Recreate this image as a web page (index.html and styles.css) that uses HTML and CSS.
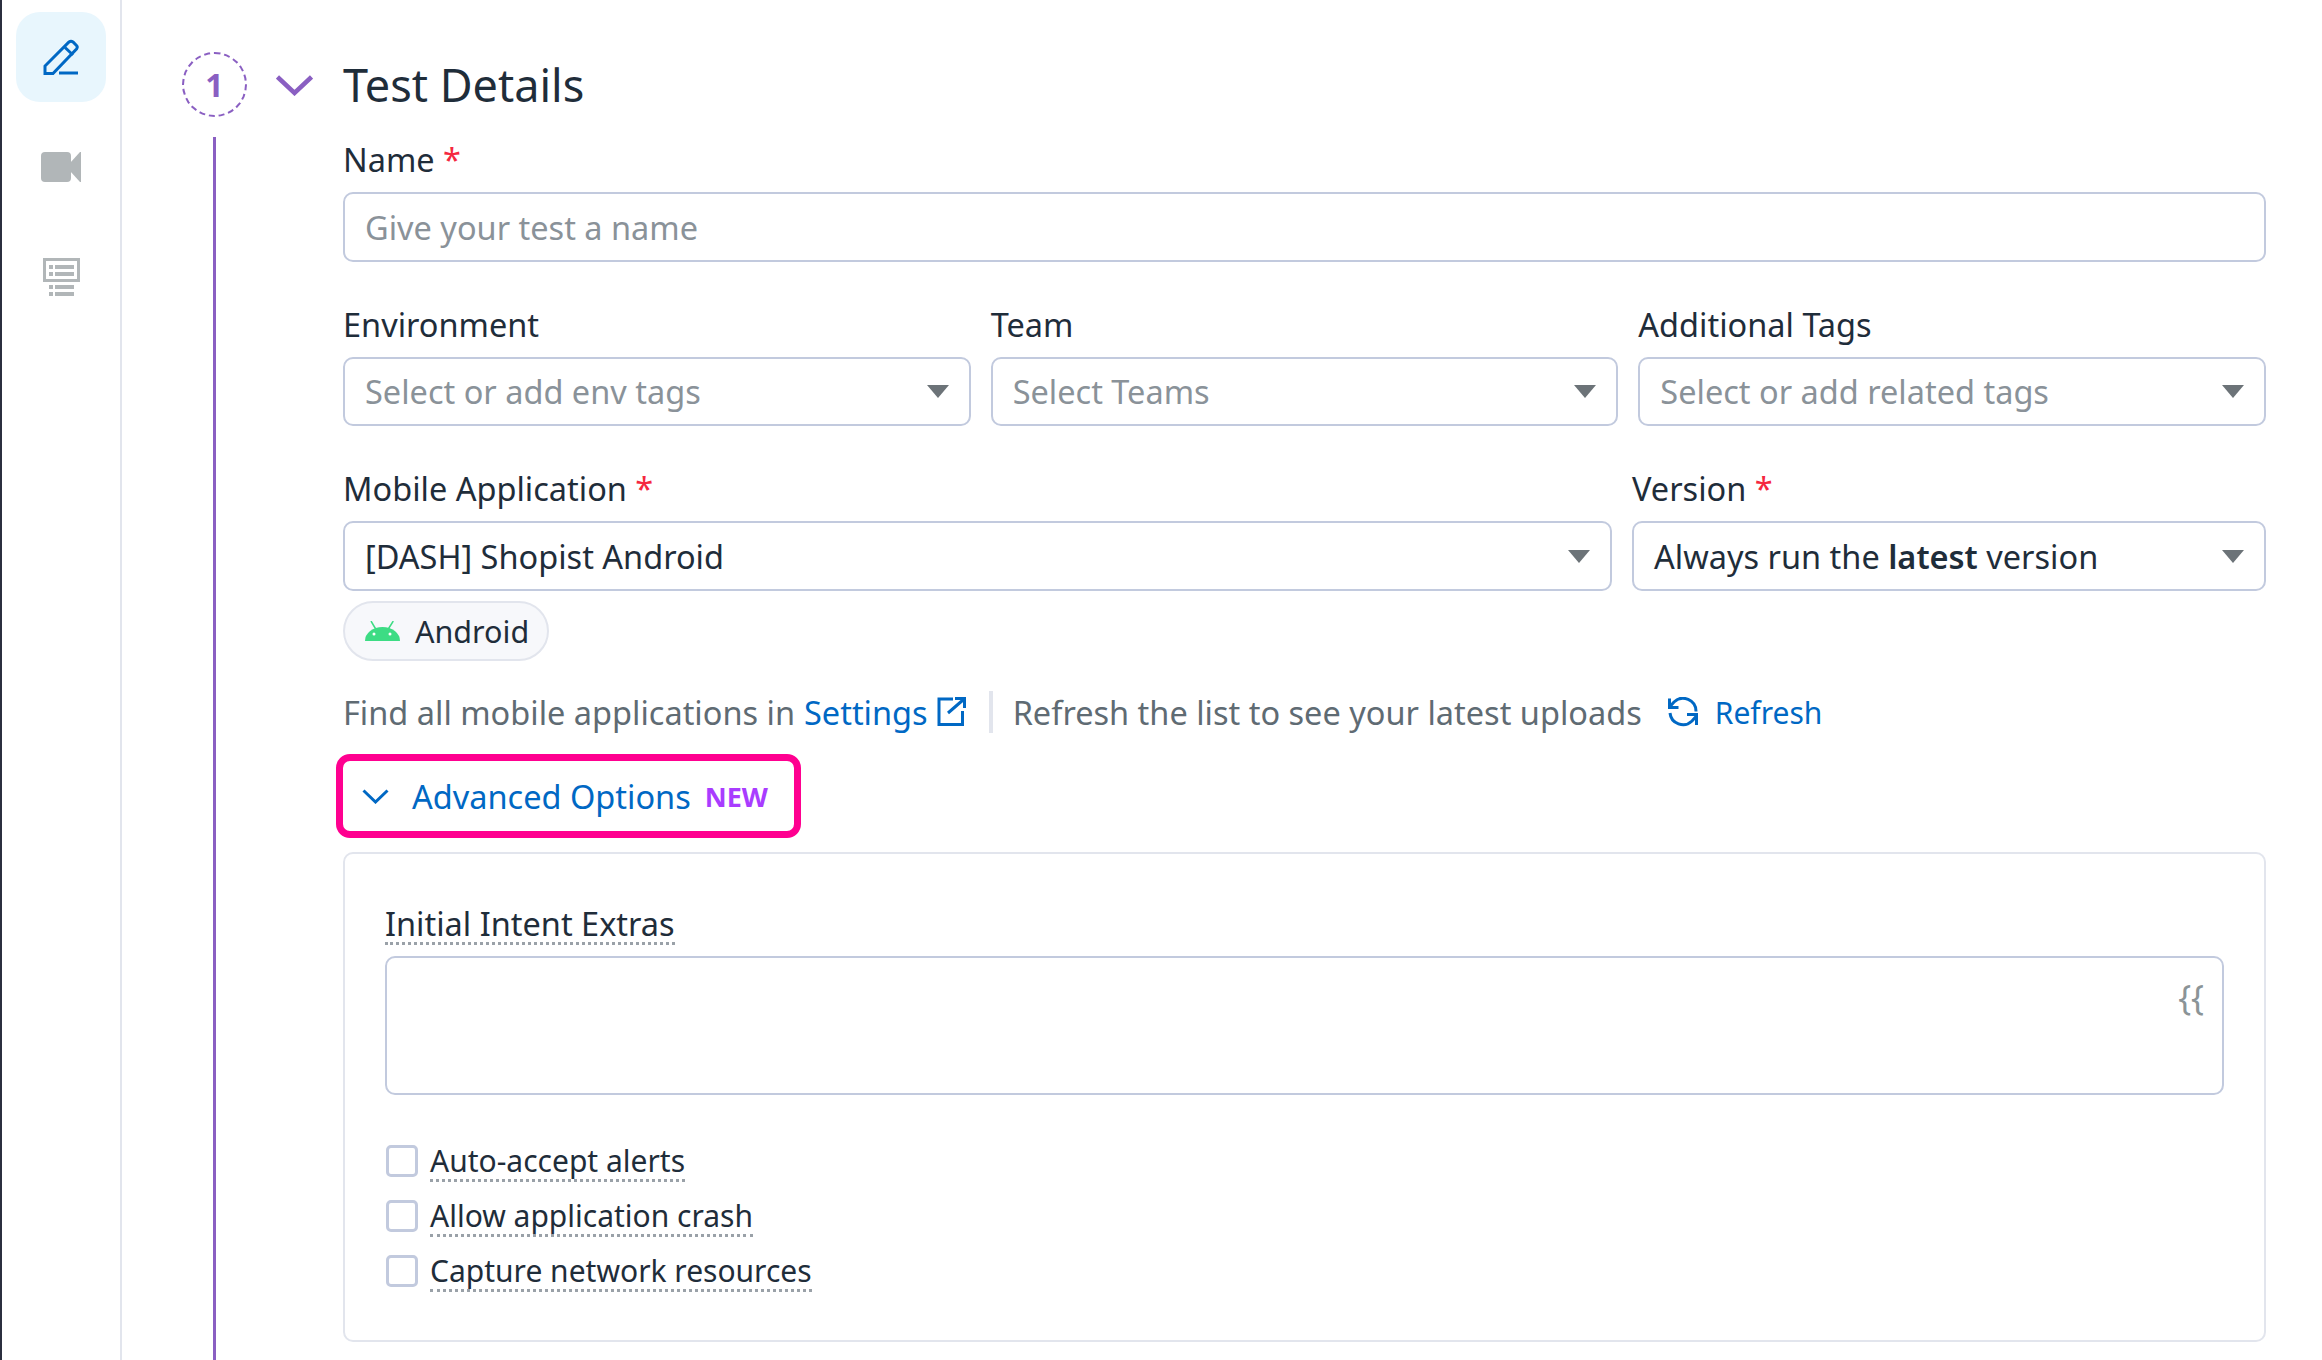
FILE: index.html
```html
<!DOCTYPE html>
<html lang="en">
<head>
	<meta charset="UTF-8">
	<title>Test Details</title>
	<link rel="stylesheet" href="styles.css">
</head>
<body>
	<div class="app">
		<!-- Left icon rail -->
		<nav class="sidebar">
			<a class="side-btn side-btn-active">
				<svg width="36" height="36" viewBox="0 0 36 36" fill="none" stroke="#0068c4" stroke-width="3">
					<path d="M2 34.5V27L26 3Q28 1.5 30 3L33.5 6.5Q35 8 33.5 10L10 34.5Z"/>
					<path d="M22 8.5L30 16"/>
					<path d="M16 34H35"/>
				</svg>
			</a>
			<a class="side-btn">
				<svg width="40" height="30" viewBox="0 0 40 30" fill="#b1b6b8">
					<rect width="30" height="30" rx="4"/>
					<path d="M29 11L39 0H40V30H39L29 19Z"/>
				</svg>
			</a>
			<a class="side-btn">
				<svg width="37" height="38" viewBox="0 0 37 38" fill="#b1b6b8">
					<path d="M0 0H37V24H0ZM3 3V21H34V3Z" fill-rule="evenodd"/>
					<rect x="6" y="7" width="4" height="4"/>
					<rect x="12" y="7" width="19" height="4"/>
					<rect x="6" y="14" width="4" height="4"/>
					<rect x="12" y="14" width="19" height="4"/>
					<rect x="6" y="27" width="4" height="4"/>
					<rect x="12" y="27" width="19" height="4"/>
					<rect x="6" y="34" width="4" height="4"/>
					<rect x="12" y="34" width="19" height="4"/>
				</svg>
			</a>
		</nav>

		<main class="step">
			<!-- Step number and its line -->
			<div class="step-rail">
				<div class="step-num">1</div>
				<div class="step-line"></div>
			</div>
			<svg class="step-chevron" width="37" height="21" viewBox="0 0 37 21" fill="none" stroke="#8a5fc2" stroke-width="4.5">
				<path d="M1.5 2L18.5 18L35.5 2"/>
			</svg>

			<div class="step-body">
				<h1 class="title">Test Details</h1>

				<label class="label label-name">Name <span class="req">*</span></label>
				<div class="input placeholder">Give your test a name</div>

				<div class="row row-three">
					<div>
						<label class="label">Environment</label>
						<div class="input select placeholder">Select or add env tags<i class="caret"></i></div>
					</div>
					<div>
						<label class="label">Team</label>
						<div class="input select placeholder">Select Teams<i class="caret"></i></div>
					</div>
					<div>
						<label class="label">Additional Tags</label>
						<div class="input select placeholder">Select or add related tags<i class="caret"></i></div>
					</div>
				</div>

				<div class="row row-app">
					<div>
						<label class="label">Mobile Application <span class="req">*</span></label>
						<div class="input select">[DASH] Shopist Android<i class="caret"></i></div>
					</div>
					<div>
						<label class="label">Version <span class="req">*</span></label>
						<div class="input select">
							<span>Always run the <b class="strong">latest</b> version</span><i class="caret"></i>
						</div>
					</div>
				</div>

				<div class="pill">
					<svg width="35" height="20" viewBox="0 0 35 20">
						<path d="M0 20A17.5 14 0 0 1 35 20Z" fill="#3ddc84"/>
						<path d="M10.7 8L6 0M23.3 8L28.3 0" stroke="#3ddc84" stroke-width="1.5"/>
						<circle cx="9" cy="13" r="1.5" fill="#fff"/>
						<circle cx="25" cy="13" r="1.5" fill="#fff"/>
					</svg>
					Android
				</div>

				<div class="hint">
					<span>Find all mobile applications in</span>
					<a class="link link-settings">Settings</a>
					<svg class="icon-ext" width="30" height="30" viewBox="0 0 30 30" fill="none" stroke="#0068c4" stroke-width="3">
						<path d="M16 2H2V27.5H25.5V14"/>
						<path d="M11 16L26 3M18 1.5H27.5V11"/>
					</svg>
					<span class="hint-sep"></span>
					<span>Refresh the list to see your latest uploads</span>
					<svg class="icon-refresh" width="30" height="30" viewBox="0 0 30 30" fill="none" stroke="#0068c4" stroke-width="3">
						<path d="M28 14.5A13 13 0 0 0 6 5L1.5 10"/>
						<path d="M1.5 1.5V10.5H10.5"/>
						<path d="M2 16A13 13 0 0 0 24 24L28.5 19"/>
						<path d="M28.5 28V17.5H19"/>
					</svg>
					<a class="link link-refresh">Refresh</a>
				</div>

				<div class="advanced">
					<svg width="27" height="15" viewBox="0 0 27 15" fill="none" stroke="#0068c4" stroke-width="3">
						<path d="M1.5 1.5L13.5 13L25.5 1.5"/>
					</svg>
					<span class="advanced-text">Advanced Options</span>
					<span class="badge-new">NEW</span>
				</div>

				<section class="panel">
					<label class="label"><span class="dotted">Initial Intent Extras</span></label>
					<div class="textarea"><span class="braces">{{</span></div>
					<div class="checks">
						<div class="check"><span class="box"></span><span class="dotted">Auto-accept alerts</span></div>
						<div class="check"><span class="box"></span><span class="dotted">Allow application crash</span></div>
						<div class="check"><span class="box"></span><span class="dotted">Capture network resources</span></div>
					</div>
				</section>
			</div>
		</main>
	</div>
</body>
</html>
```

FILE: styles.css
```css
/* Global Styles */
html, body {
	margin: 0;
	height: 100%;
	overflow: hidden;
}

body {
	font-family: "Noto Sans", sans-serif;
	font-size: 32.5px;
	color: #1f2d3a;
	background: #fff;
}

.app {
	display: flex;
	height: 100vh;
}

/* Left icon rail */
.sidebar {
	box-sizing: border-box;
	flex: 0 0 122px;
	border-left: 2px solid #2b2f3f;
	border-right: 2px solid #e2e5ed;
	padding: 12px 14px 0;
	display: flex;
	flex-direction: column;
	gap: 20px;
}

.side-btn {
	width: 90px;
	height: 90px;
	border-radius: 24px;
	display: flex;
	align-items: center;
	justify-content: center;
}

.side-btn-active {
	background: #e8f6fd;
}

/* Step layout */
.step {
	flex: 1;
	display: flex;
	align-items: flex-start;
	height: 100%;
	padding-left: 60px;
	box-sizing: border-box;
}

.step-rail {
	flex: 0 0 65px;
	height: 100%;
	display: flex;
	flex-direction: column;
	align-items: center;
	padding-top: 52px;
	box-sizing: border-box;
}

.step-num {
	flex: 0 0 65px;
	width: 65px;
	box-sizing: border-box;
	border: 2.5px dashed #8a5fc2;
	border-radius: 50%;
	display: flex;
	align-items: center;
	justify-content: center;
	font-size: 32px;
	font-weight: 700;
	color: #8a5fc2;
}

.step-line {
	flex: 1;
	width: 3px;
	margin-top: 20px;
	background: #8a5fc2;
}

.step-chevron {
	margin: 75px 30px 0 29px;
	flex: none;
}

.step-body {
	width: 1923px;
	flex: none;
}

.title {
	margin: 60px 0 0;
	font-size: 45px;
	font-weight: 400;
	line-height: 50px;
}

/* Form fields */
.label {
	display: block;
	height: 40px;
	line-height: 40px;
	margin-bottom: 12px;
}

.label-name {
	margin-top: 30px;
}

.req {
	color: #f5283f;
}

.input {
	box-sizing: border-box;
	height: 70px;
	border: 2.5px solid #c2cade;
	border-radius: 10px;
	padding: 0 20px;
	display: flex;
	align-items: center;
	justify-content: space-between;
}

.placeholder {
	color: #8a9299;
}

.select {
	padding-right: 20px;
}

.strong {
	font-weight: 600;
}

.caret {
	width: 0;
	height: 0;
	border-left: 11.5px solid transparent;
	border-right: 11.5px solid transparent;
	border-top: 13px solid #6c7378;
}

.row {
	display: grid;
	gap: 20px;
	margin-top: 43px;
}

.row-three {
	grid-template-columns: repeat(3, 1fr);
}

.row-three .input {
	height: 69px;
}

.row-app {
	grid-template-columns: 1269px 634px;
}

/* Platform pill */
.pill {
	box-sizing: border-box;
	display: inline-flex;
	align-items: center;
	gap: 15px;
	width: 206px;
	height: 60px;
	margin-top: 10px;
	padding-left: 20px;
	font-size: 30.5px;
	background: #f7f8fb;
	border: 2px solid #e2e5ed;
	border-radius: 30px;
	vertical-align: top;
}

/* Help line */
.hint {
	display: flex;
	align-items: center;
	height: 42px;
	margin-top: 30px;
	color: #5f6b73;
}

.link {
	color: #0068c4;
}

.link-settings {
	margin-left: 9px;
}

.icon-ext {
	margin-left: 9px;
}

.hint-sep {
	width: 4px;
	height: 42px;
	margin: 0 20px 0 22px;
	background: #e2e5ed;
}

.icon-refresh {
	margin-left: 26px;
}

.link-refresh {
	margin-left: 17px;
	font-size: 30px;
}

/* Advanced Options toggle */
.advanced {
	box-sizing: border-box;
	display: flex;
	align-items: center;
	width: 465px;
	height: 84px;
	margin: 21px 0 14px -7px;
	padding-left: 19px;
	border: 7px solid #ff0090;
	border-radius: 14px;
	color: #0068c4;
}

.advanced-text {
	margin-left: 23px;
}

.badge-new {
	margin-left: 14px;
	font-size: 27px;
	font-weight: 700;
	color: #a93cff;
}

/* Advanced panel */
.panel {
	box-sizing: border-box;
	height: 490px;
	border: 2.5px solid #e2e5ed;
	border-radius: 10px;
	padding: 50px 40px 0;
}

.dotted {
	border-bottom: 3px dotted #9aa1a8;
	line-height: 36px;
	display: inline-block;
}

.textarea {
	box-sizing: border-box;
	height: 139px;
	border: 2.5px solid #c2cade;
	border-radius: 10px;
	display: flex;
	justify-content: flex-end;
	padding: 19px 18px 0 0;
}

.braces {
	font-size: 34px;
	line-height: 40px;
	height: 40px;
	color: #8b9497;
}

.checks {
	margin-top: 39px;
}

.check {
	display: flex;
	align-items: center;
	height: 55px;
	gap: 12px;
	font-size: 30px;
}

.check .dotted {
	margin-top: 2px;
}

.box {
	box-sizing: border-box;
	flex: none;
	width: 32px;
	height: 32px;
	margin: 0 0 2px 1px;
	border: 3px solid #c2cade;
	border-radius: 5px;
}
```
